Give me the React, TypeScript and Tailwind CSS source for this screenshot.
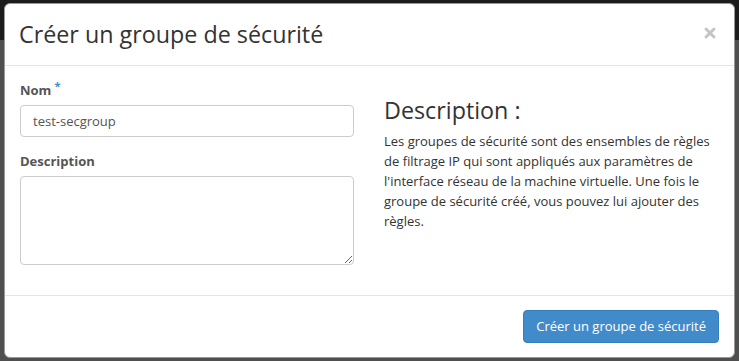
import { X } from "lucide-react";

export default function App() {
	return (
		<div className="h-[361px] w-[739px] overflow-hidden bg-[linear-gradient(to_bottom,#1c1c1c_40px,#4f4f4f_40px)] pt-[3px] pr-[4px] pl-[4px] font-['Open_Sans',sans-serif]">
			<div className="flex h-[355px] flex-col rounded-[6px] border border-[#999] bg-white">
				<div className="flex h-[62px] shrink-0 items-center justify-between border-b border-[#e5e5e5] pr-[16px] pl-[14px]">
					<h1 className="text-[23.3px] leading-none text-[#333]">Créer un groupe de sécurité</h1>
					<X className="-mt-[4px] size-[16px] text-[#c4c4c4]" strokeWidth={4.5} />
				</div>
				<div className="flex h-[229px] shrink-0 gap-[30px] px-[15px] pt-[15px]">
					<div className="flex w-[335px] flex-col">
						<label className="flex items-start text-[13px] font-bold leading-[18px] text-[#555]">
							Nom
							<span className="ml-[3px] -mt-[4px] text-[11px] text-[#428bca]">*</span>
						</label>
						<input
							className="mt-[6px] h-[32px] rounded-[4px] border border-[#ccc] px-[12px] text-[13px] text-[#555] outline-none"
							defaultValue="test-secgroup"
						/>
						<label className="mt-[15px] text-[13px] font-bold leading-[18px] text-[#555]">Description</label>
						<textarea className="mt-[6px] h-[89px] resize rounded-[4px] border border-[#ccc] px-[12px] text-[13px] text-[#555] outline-none" />
					</div>
					<div className="flex w-[336px] flex-col">
						<h2 className="mt-[16px] text-[23.3px] leading-[27px] text-[#333]">Description :</h2>
						<p className="mt-[7px] text-[13px] leading-[20px] text-[#333]">
							Les groupes de sécurité sont des ensembles de règles de filtrage IP qui sont appliqués aux paramètres de l'interface réseau de la machine virtuelle. Une fois le groupe de sécurité créé, vous pouvez lui ajouter des règles.
						</p>
					</div>
				</div>
				<div className="flex flex-1 items-center justify-end border-t border-[#e5e5e5] px-[15px]">
					<button className="h-[33px] rounded-[4px] border border-[#357ebd] bg-[#428bca] px-[12px] text-[13px] text-white">
						Créer un groupe de sécurité
					</button>
				</div>
			</div>
		</div>
	);
}
